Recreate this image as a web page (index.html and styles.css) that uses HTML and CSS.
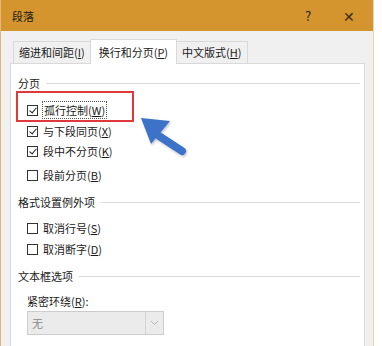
FILE: index.html
```html
<!DOCTYPE html>
<html lang="zh-CN">
<head>
    <meta charset="UTF-8">
    <title>段落</title>
    <link rel="stylesheet" href="styles.css">
</head>
<body>
    <div class="window">
        <div class="titlebar">
            <span class="title">段落</span>
            <span class="help">?</span>
            <span class="close">&#x2715;</span>
        </div>

        <div class="dialog">
            <!-- tab strip -->
            <div class="tabs">
                <div class="tab">缩进和间距(<u>I</u>)</div>
                <div class="tab active">换行和分页(<u>P</u>)</div>
                <div class="tab">中文版式(<u>H</u>)</div>
            </div>

            <div class="panel">
                <div class="group-title first">分页</div>
                <div class="check row-1"><span class="box checked"></span><span class="focus">孤行控制(<u>W</u>)</span></div>
                <div class="check row-2"><span class="box checked"></span>与下段同页(<u>X</u>)</div>
                <div class="check"><span class="box checked"></span>段中不分页(<u>K</u>)</div>
                <div class="check row-4"><span class="box"></span>段前分页(<u>B</u>)</div>

                <div class="group-title">格式设置例外项</div>
                <div class="check row-5"><span class="box"></span>取消行号(<u>S</u>)</div>
                <div class="check row-2"><span class="box"></span>取消断字(<u>D</u>)</div>

                <div class="group-title">文本框选项</div>
                <div class="field-label">紧密环绕(<u>R</u>):</div>
                <div class="select">
                    <span class="select-value">无</span>
                    <span class="select-arrow">
                        <svg width="9" height="6" viewBox="0 0 9 6"><path d="M1 1 L4.5 4.5 L8 1" fill="none" stroke="#b0b0b0" stroke-width="1"/></svg>
                    </span>
                </div>
            </div>
        </div>

        <!-- annotation overlays -->
        <div class="highlight"></div>
        <svg class="arrow" width="60" height="50" viewBox="0 0 60 50">
            <defs>
                <filter id="sh" x="-20%" y="-20%" width="140%" height="140%">
                    <feDropShadow dx="1" dy="1.5" stdDeviation="1.2" flood-color="#000" flood-opacity="0.25"/>
                </filter>
            </defs>
            <g filter="url(#sh)">
                <line x1="20" y1="20" x2="43" y2="35" stroke="#3d72c9" stroke-width="8" stroke-linecap="round"/>
                <polygon points="2,2 31,5 12,28" fill="#3d72c9"/>
            </g>
        </svg>
    </div>
</body>
</html>
```

FILE: styles.css
```css
body {
    margin: 0;
    background-color: #ffffff;
    font-family: "Noto Sans CJK SC", "Noto Sans", sans-serif;
    font-size: 11px;
    color: #1a1a1a;
}
.window {
    position: relative;
    width: 372px;
    height: 346px;
    background-color: #f0f0f0;
    border-left: 1px solid #e7b77a;
    border-right: 1px solid #e3d9b8;
    overflow: hidden;
}
.titlebar {
    display: flex;
    align-items: center;
    height: 31px;
    background-color: #d4952f;
    padding-left: 11px;
}
.title {
    flex: 1;
    line-height: 16px;
}
.help {
    width: 38px;
    font-size: 13px;
    line-height: 16px;
}
.close {
    width: 30px;
    font-size: 14px;
    line-height: 16px;
    color: #3a2a10;
}
.dialog {
    padding: 8px 8px 0 9px;
}
.tabs {
    display: flex;
    align-items: flex-end;
    height: 24px;
    padding-left: 3px;
}
.tab {
    height: 21px;
    line-height: 21px;
    padding: 0 5px;
    background-color: #f0f0f0;
    border: 1px solid #d9d9d9;
    border-bottom: none;
    margin-right: -1px;
}
.tab.active {
    height: 24px;
    line-height: 24px;
    background-color: #ffffff;
    position: relative;
    z-index: 1;
    margin-bottom: -1px;
    padding: 0 8px;
}
.panel {
    height: 300px;
    background-color: #ffffff;
    border: 1px solid #d9d9d9;
    padding: 0 4px 0 7px;
}
.group-title {
    display: flex;
    align-items: center;
    height: 20px;
    margin-top: 7px;
}
.group-title.first {
    margin-top: 9px;
}
.group-title::after {
    content: "";
    flex: 1;
    height: 1px;
    background-color: #dcdcdc;
    margin-left: 6px;
}
.check {
    display: flex;
    align-items: center;
    height: 20px;
    padding-left: 9px;
}
.row-1 { margin-top: 7px; }
.row-2 { margin-top: 1px; }
.row-4 { margin-top: 4px; }
.row-5 { margin-top: 6px; }
.box {
    box-sizing: border-box;
    width: 11px;
    height: 11px;
    border: 1px solid #333333;
    background-color: #ffffff;
    margin-right: 5px;
    position: relative;
}
.box.checked::after {
    content: "";
    position: absolute;
    left: 3px;
    top: 0px;
    width: 3px;
    height: 6px;
    border-right: 1px solid #222;
    border-bottom: 1px solid #222;
    transform: rotate(40deg);
}
.focus {
    outline: 1px dotted #555;
    outline-offset: 0;
    padding: 0 1px;
}
.field-label {
    height: 20px;
    line-height: 20px;
    margin-top: 5px;
    padding-left: 9px;
}
.select {
    display: flex;
    width: 137px;
    height: 24px;
    margin-left: 9px;
    box-sizing: border-box;
    border: 1px solid #cccccc;
    background-color: #ebebeb;
}
.select-value {
    flex: 1;
    line-height: 22px;
    padding-left: 4px;
    color: #8a8a8a;
}
.select-arrow {
    display: flex;
    align-items: center;
    justify-content: center;
    width: 17px;
    border-left: 1px solid #d4d4d4;
}
.highlight {
    position: absolute;
    left: 15px;
    top: 91px;
    width: 114px;
    height: 27px;
    border: 2px solid #e0393c;
}
.arrow {
    position: absolute;
    left: 138px;
    top: 116px;
}
```
